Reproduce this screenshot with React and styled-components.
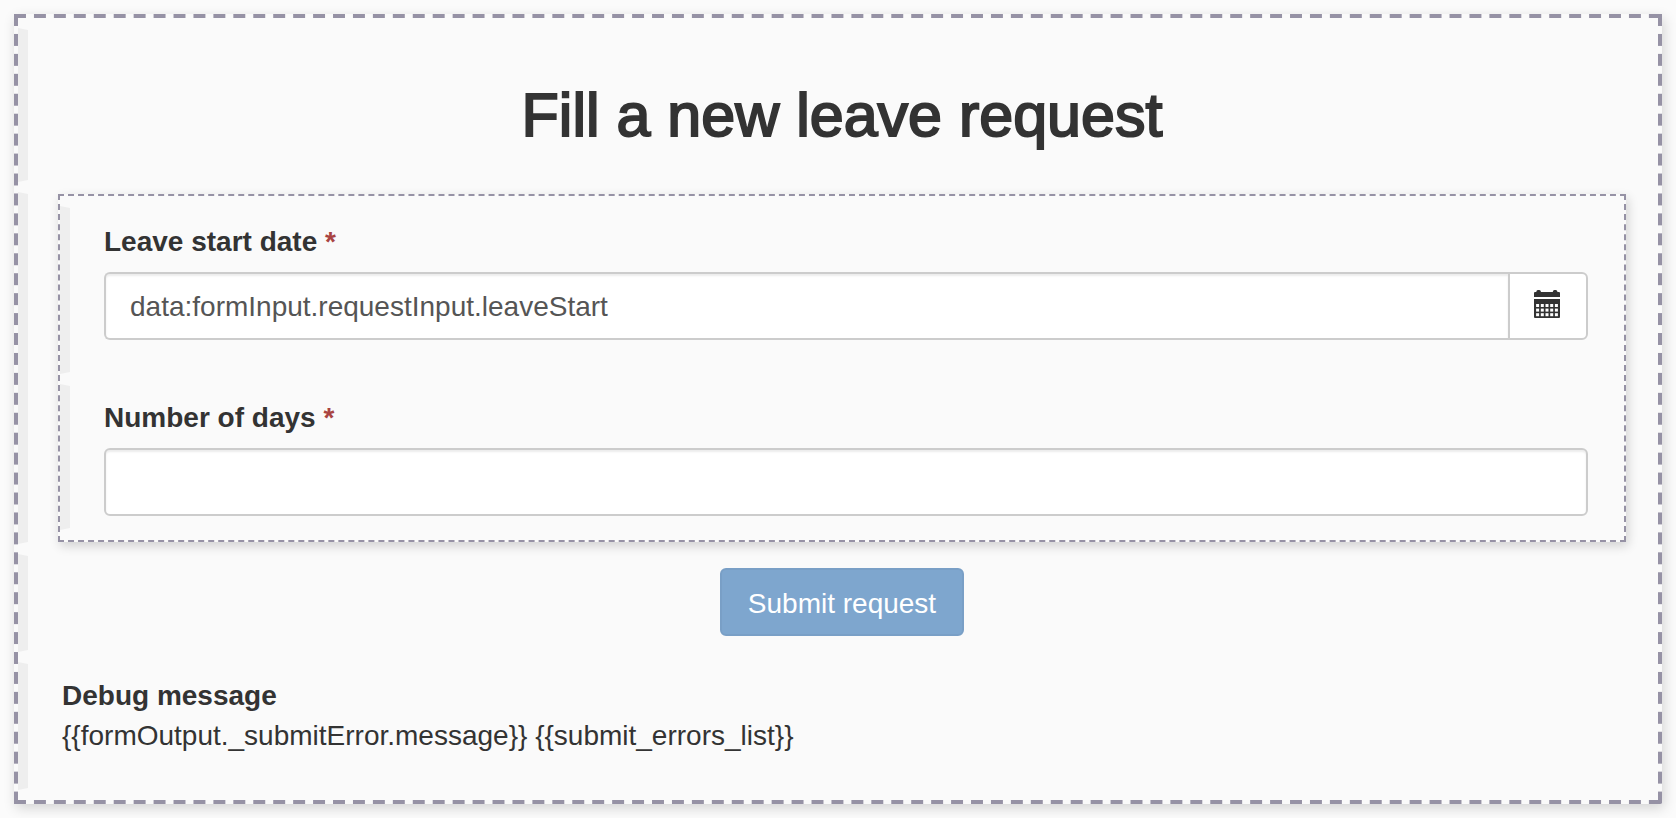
import React from "react";
import styled, { createGlobalStyle, css } from "styled-components";

const DASH = "#9692a5";

const GlobalStyle = createGlobalStyle`
  *, *::before, *::after { box-sizing: border-box; }
  body {
    margin: 0;
    background: #fbfbfb;
    color: #333;
    font-family: "Liberation Sans", Arial, sans-serif;
    font-size: 28px;
    line-height: 40px;
  }
`;

const Page = styled.main`
  padding: 14px;
`;

const across = `linear-gradient(to right, ${DASH} 30%, transparent 30% 70%, ${DASH} 70%)`;
const down = `linear-gradient(to bottom, ${DASH} 30%, transparent 30% 70%, ${DASH} 70%)`;

/* Long dashes: each tile holds a gap between two half dashes. */
const FormCanvas = styled.form`
  display: flex;
  flex-direction: column;
  gap: 10px;
  border: 6px solid transparent;
  padding: 8px 0;
  background:
    ${across} left 0 top -6px / 20px 4px round no-repeat,
    ${across} left 0 bottom -6px / 20px 4px round no-repeat,
    ${down} left -6px top 0 / 4px 20px no-repeat round,
    ${down} right -6px top 0 / 4px 20px no-repeat round,
    #fafafa;
  background-origin: padding-box;
  background-clip: border-box;
  box-shadow: 2px 4px 12px rgba(0, 0, 0, 0.16);
`;

const handle = css`
  border: 2px solid transparent;
  border-left: 10px solid #eee;
`;

const Row = styled.section`
  ${handle}
  margin: 0 -2px;
  padding: ${(p) => p.$pad || "12px 34px"};
  text-align: ${(p) => p.$align || "left"};
`;

const Title = styled.h2`
  margin: 40px 0 20px;
  font-size: 61px;
  line-height: 66px;
  font-weight: 400;
  -webkit-text-stroke: 2px #333;
`;

const FieldSet = styled.div`
  display: flex;
  flex-direction: column;
  gap: 10px;
  padding: 10px 0;
  border: 2px dashed ${DASH};
  background: #fafafa;
  box-shadow: 2px 4px 10px rgba(0, 0, 0, 0.16);
`;

const Field = styled.div`
  ${handle}
  padding: ${(p) => p.$pad || "12px 34px"};
`;

const Label = styled.label`
  display: block;
  margin-bottom: 10px;
  font-weight: 700;
`;

const Required = styled.span`
  color: #a94442;
`;

const InputGroup = styled.div`
  display: flex;
`;

const TextInput = styled.input`
  display: block;
  flex: 1;
  min-width: 0;
  width: 100%;
  height: 68px;
  padding: 14px 24px 12px;
  border: 2px solid #ccc;
  border-radius: ${(p) => (p.$joined ? "6px 0 0 6px" : "6px")};
  border-right-width: ${(p) => (p.$joined ? "0" : "2px")};
  background: #fff;
  box-shadow: inset 0 2px 2px rgba(0, 0, 0, 0.075);
  color: #555;
  font: inherit;
  &::placeholder { color: #555; opacity: 1; }
`;

const CalendarButton = styled.button`
  display: flex;
  align-items: center;
  justify-content: center;
  width: 80px;
  padding: 0 2px 4px 0;
  border: 2px solid #ccc;
  border-radius: 0 6px 6px 0;
  background: #fff;
  color: #333;
`;

const SubmitButton = styled.button`
  height: 68px;
  padding: 14px 26px 12px;
  border: 2px solid #799fc6;
  border-radius: 6px;
  background: #7ea6ce;
  color: #fff;
  font: inherit;
  vertical-align: top;
`;

const Message = styled.p`
  margin: 0;
`;

function CalendarIcon() {
  const holes = [];
  for (let r = 0; r < 3; r++) {
    for (let c = 0; c < 5; c++) {
      holes.push(
        <rect key={`${r}-${c}`} x={2.1 + c * 4.7} y={14 + r * 4.6} width="3" height="3" fill="#fff" />
      );
    }
  }
  return (
    <svg width="26" height="28" viewBox="0 0 26 28" fill="currentColor" aria-hidden="true">
      <path d="M0 7V3q0-1 1-1h1.200q.3-2 1.700-2h1.400q1.400 0 1.700 2h11.700q.3-2 1.700-2h1.400q1.400 0 1.700 2h1.500q1 0 1 1v4z" />
      <path d="M0 9h26v18q0 1-1 1H1q-1 0-1-1z" />
      {holes}
    </svg>
  );
}

export default function App() {
  return (
    <>
      <GlobalStyle />
      <Page>
        <FormCanvas onSubmit={(e) => e.preventDefault()}>
          <Row $align="center">
            <Title>Fill a new leave request</Title>
          </Row>
          <Row $pad="0 30px">
            <FieldSet>
              <Field $pad="14px 34px 32px">
                <Label htmlFor="leave-start">
                  Leave start date <Required>*</Required>
                </Label>
                <InputGroup>
                  <TextInput
                    id="leave-start"
                    type="text"
                    placeholder="data:formInput.requestInput.leaveStart"
                    $joined
                  />
                  <CalendarButton type="button" aria-label="Choose a date">
                    <CalendarIcon />
                  </CalendarButton>
                </InputGroup>
              </Field>
              <Field>
                <Label htmlFor="day-count">
                  Number of days <Required>*</Required>
                </Label>
                <TextInput id="day-count" type="text" />
              </Field>
            </FieldSet>
          </Row>
          <Row $align="center" $pad="12px 34px 14px">
            <SubmitButton type="submit">Submit request</SubmitButton>
          </Row>
          <Row $pad="12px 34px 32px">
            <Message>
              <strong>Debug message</strong>
            </Message>
            <Message>{"{{formOutput._submitError.message}} {{submit_errors_list}}"}</Message>
          </Row>
        </FormCanvas>
      </Page>
    </>
  );
}
